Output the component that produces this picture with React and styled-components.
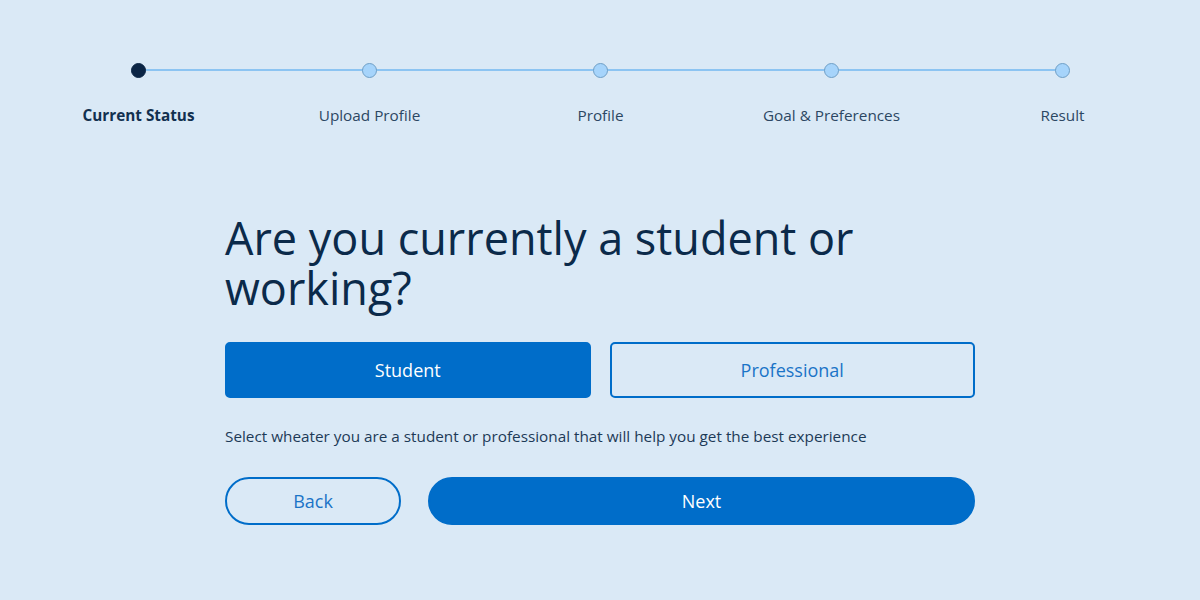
import React from 'react';
import styled, { createGlobalStyle } from 'styled-components';

const GlobalStyle = createGlobalStyle`
  html, body {
    margin: 0;
    padding: 0;
    background: #dae9f6;
    font-family: "Open Sans", "Noto Sans", sans-serif;
  }
`;

const steps = ['Current Status', 'Upload Profile', 'Profile', 'Goal & Preferences', 'Result'];

const Page = styled.div`
  width: 1200px;
  height: 600px;
  background: #dae9f6;
  overflow: hidden;
`;

const Stepper = styled.div`
  position: relative;
  display: grid;
  grid-template-columns: repeat(5, 231px);
  width: 1155px;
  margin: 63px 0 0 23px;
`;

const Track = styled.div`
  position: absolute;
  left: 115px;
  right: 115px;
  top: 6px;
  height: 2px;
  background: #8cc4f2;
`;

const Step = styled.div`
  position: relative;
  display: flex;
  flex-direction: column;
  align-items: center;
`;

const Dot = styled.span`
  width: 15px;
  height: 15px;
  box-sizing: border-box;
  border-radius: 50%;
  background: ${p => (p.$active ? '#0b2545' : '#a6d4fb')};
  border: 1px solid ${p => (p.$active ? '#0b2545' : '#6f9fc6')};
`;

const StepLabel = styled.span`
  margin-top: 27px;
  font-size: 15.3px;
  line-height: 20px;
  color: ${p => (p.$active ? '#12304f' : '#2c4763')};
  font-weight: ${p => (p.$active ? 700 : 400)};
`;

const Main = styled.main`
  width: 750px;
  margin: 88px 0 0 225px;
`;

const Title = styled.h1`
  margin: 0;
  font-size: 45px;
  line-height: 50px;
  font-weight: 400;
  color: #0b2a4a;
`;

const Choices = styled.div`
  display: grid;
  grid-template-columns: 1fr 1fr;
  gap: 19px;
  margin-top: 29px;
`;

const Choice = styled.button`
  height: 56px;
  border-radius: 5px;
  border: 2px solid #006dc9;
  background: ${p => (p.$selected ? '#006dc9' : 'transparent')};
  color: ${p => (p.$selected ? '#ffffff' : '#1a74c7')};
  font-family: inherit;
  font-size: 18px;
  cursor: pointer;
`;

const Hint = styled.p`
  margin: 28px 0 0;
  font-size: 15.3px;
  line-height: 20px;
  color: #1d3a57;
`;

const Actions = styled.div`
  display: flex;
  gap: 27px;
  margin-top: 31px;
`;

const PillButton = styled.button`
  height: 48px;
  border-radius: 24px;
  border: 2px solid #006dc9;
  background: ${p => (p.$primary ? '#006dc9' : 'transparent')};
  color: ${p => (p.$primary ? '#ffffff' : '#1a74c7')};
  width: ${p => (p.$primary ? 'auto' : '176px')};
  flex: ${p => (p.$primary ? 1 : 'none')};
  font-family: inherit;
  font-size: 18px;
  cursor: pointer;
`;

export default function App() {
  return (
    <Page>
      <GlobalStyle />
      <Stepper>
        <Track />
        {steps.map((s, i) => (
          <Step key={s}>
            <Dot $active={i === 0} />
            <StepLabel $active={i === 0}>{s}</StepLabel>
          </Step>
        ))}
      </Stepper>
      <Main>
        <Title>Are you currently a student or working?</Title>
        <Choices>
          <Choice $selected>Student</Choice>
          <Choice>Professional</Choice>
        </Choices>
        <Hint>Select wheater you are a student or professional that will help you get the best experience</Hint>
        <Actions>
          <PillButton>Back</PillButton>
          <PillButton $primary>Next</PillButton>
        </Actions>
      </Main>
    </Page>
  );
}
